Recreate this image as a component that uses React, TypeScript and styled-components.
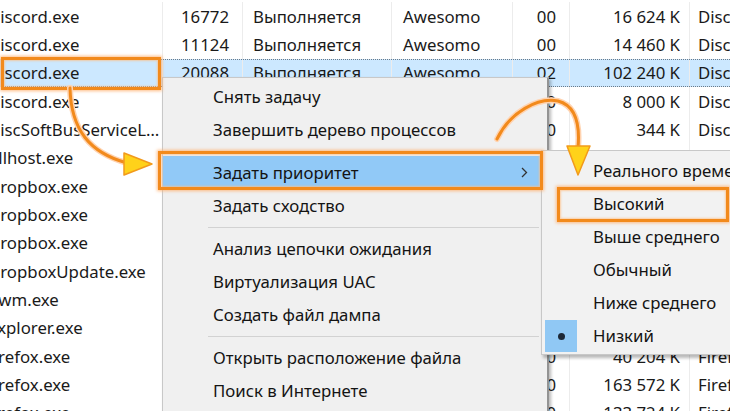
import React from "react";
import styled, { createGlobalStyle, css } from "styled-components";

const GlobalStyle = createGlobalStyle`
  html, body { margin: 0; padding: 0; background: #ffffff; }
  body { font-family: "Noto Sans", "Open Sans", "DejaVu Sans", sans-serif; color: #1a1a1a; }
  * { box-sizing: border-box; }
`;

const Screen = styled.div`
  position: relative;
  width: 730px;
  height: 411px;
  overflow: hidden;
  background: #ffffff;
`;

const Table = styled.div`
  display: flex;
  flex-direction: column;
  padding-top: 2px;
  margin-left: -12px;
  width: 760px;
`;

const Row = styled.div<{ $selected?: boolean }>`
  display: grid;
  grid-template-columns: 175px 80px 149px 121px 57px 120px 1fr;
  height: 28.33px;
  font-size: 16.8px;
  ${(p) =>
    p.$selected &&
    css`
      background: #cce8ff;
      border-top: 1px dotted #6b7a88;
      border-bottom: 1px dotted #6b7a88;
    `}
`;

const Cell = styled.div<{ $right?: boolean; $pad: number }>`
  display: flex;
  align-items: center;
  justify-content: ${(p) => (p.$right ? "flex-end" : "flex-start")};
  padding-left: ${(p) => (p.$right ? 0 : p.$pad)}px;
  padding-right: ${(p) => (p.$right ? p.$pad : 2)}px;
  border-right: 1px solid #ececec;
  white-space: nowrap;
  overflow: hidden;
  min-width: 0;
`;

const NameText = styled.span`
  overflow: hidden;
  text-overflow: ellipsis;
  white-space: nowrap;
`;

const ContextMenu = styled.div`
  position: absolute;
  left: 162px;
  top: 77px;
  width: 387px;
  height: 360px;
  background: #f0f0f0;
  border: 1px solid #c8c8c8;
  border-right: 2px solid #939393;
  box-shadow: 2px 2px 3px rgba(0, 0, 0, 0.28);
  padding-top: 2px;
  display: flex;
  flex-direction: column;
`;

const MenuItem = styled.div<{ $active?: boolean }>`
  height: 33px;
  display: flex;
  align-items: center;
  justify-content: space-between;
  padding-left: 50px;
  padding-right: 16px;
  font-size: 16.8px;
  color: #141414;
  margin: 0 3px 0 0;
  ${(p) =>
    p.$active &&
    css`
      background: #91c9f7;
    `}
`;

const MenuSeparator = styled.div`
  height: 10px;
  display: flex;
  align-items: center;
  padding-left: 45px;
  padding-right: 8px;
  &::after {
    content: "";
    flex: 1;
    height: 1px;
    background: #d2d2d2;
  }
`;

const SubMenu = styled.div`
  position: absolute;
  left: 541px;
  top: 150px;
  width: 240px;
  height: 205px;
  background: #f2f2f2;
  border: 1px solid #c8c8c8;
  box-shadow: 2px 3px 3px rgba(0, 0, 0, 0.28);
  padding-top: 3px;
  display: flex;
  flex-direction: column;
`;

const SubItem = styled.div`
  position: relative;
  height: 33px;
  display: flex;
  align-items: center;
  padding-left: 51px;
  font-size: 16.8px;
  color: #141414;
  white-space: nowrap;
`;

const CheckMark = styled.span`
  position: absolute;
  left: 3px;
  top: 1px;
  width: 32px;
  height: 32px;
  background: #90c8f4;
  display: flex;
  align-items: center;
  justify-content: center;
  &::after {
    content: "";
    width: 7px;
    height: 7px;
    border-radius: 50%;
    background: #1c2836;
  }
`;

const Frame = styled.div<{ $x: number; $y: number; $w: number; $h: number }>`
  position: absolute;
  left: ${(p) => p.$x}px;
  top: ${(p) => p.$y}px;
  width: ${(p) => p.$w}px;
  height: ${(p) => p.$h}px;
  border: 3px solid #f28a1c;
  box-shadow: 0 0 3px 1px rgba(255, 176, 110, 0.85), inset 0 0 2px 1px rgba(255, 190, 130, 0.7);
  pointer-events: none;
`;

const Overlay = styled.svg`
  position: absolute;
  left: 0;
  top: 0;
  width: 730px;
  height: 411px;
  pointer-events: none;
`;

type Proc = { name: string; pid: string; status: string; user: string; cpu: string; mem: string; desc: string; selected?: boolean };

const procs: Proc[] = [
  { name: "Discord.exe", pid: "16772", status: "Выполняется", user: "Awesomo", cpu: "00", mem: "16 624 K", desc: "Discord" },
  { name: "Discord.exe", pid: "11124", status: "Выполняется", user: "Awesomo", cpu: "00", mem: "14 460 K", desc: "Discord" },
  { name: "Discord.exe", pid: "20088", status: "Выполняется", user: "Awesomo", cpu: "02", mem: "102 240 K", desc: "Discord", selected: true },
  { name: "Discord.exe", pid: "6404", status: "Выполняется", user: "Awesomo", cpu: "00", mem: "8 000 K", desc: "Discord" },
  { name: "DiscSoftBusServiceLite.exe", pid: "3960", status: "Выполняется", user: "СИСТЕМА", cpu: "00", mem: "344 K", desc: "Disc Soft" },
  { name: "dllhost.exe", pid: "9188", status: "Выполняется", user: "Awesomo", cpu: "00", mem: "1 652 K", desc: "COM Surrogate" },
  { name: "Dropbox.exe", pid: "7700", status: "Выполняется", user: "Awesomo", cpu: "00", mem: "52 188 K", desc: "Dropbox" },
  { name: "Dropbox.exe", pid: "7840", status: "Выполняется", user: "Awesomo", cpu: "00", mem: "1 212 K", desc: "Dropbox" },
  { name: "Dropbox.exe", pid: "7932", status: "Выполняется", user: "Awesomo", cpu: "00", mem: "2 104 K", desc: "Dropbox" },
  { name: "DropboxUpdate.exe", pid: "5512", status: "Выполняется", user: "СИСТЕМА", cpu: "00", mem: "980 K", desc: "Dropbox Update" },
  { name: "dwm.exe", pid: "1124", status: "Выполняется", user: "DWM-1", cpu: "01", mem: "38 420 K", desc: "Desktop Window" },
  { name: "explorer.exe", pid: "6012", status: "Выполняется", user: "Awesomo", cpu: "00", mem: "64 312 K", desc: "Explorer" },
  { name: "firefox.exe", pid: "10244", status: "Выполняется", user: "Awesomo", cpu: "00", mem: "40 204 K", desc: "Firefox" },
  { name: "firefox.exe", pid: "10388", status: "Выполняется", user: "Awesomo", cpu: "00", mem: "163 572 K", desc: "Firefox" },
  { name: "firefox.exe", pid: "10512", status: "Выполняется", user: "Awesomo", cpu: "00", mem: "133 724 K", desc: "Firefox" },
];

const Chevron = () => (
  <svg width="7" height="11" viewBox="0 0 7 11">
    <polyline points="1,1 5.5,5.5 1,10" fill="none" stroke="#333" strokeWidth="1.3" />
  </svg>
);

export default function App() {
  return (
    <Screen>
      <GlobalStyle />
      <Table>
        {procs.map((p, i) => (
          <Row key={i} $selected={p.selected}>
            <Cell $pad={0}>
              <NameText>{p.name}</NameText>
            </Cell>
            <Cell $pad={18}>{p.pid}</Cell>
            <Cell $pad={10}>{p.status}</Cell>
            <Cell $pad={11}>{p.user}</Cell>
            <Cell $right $pad={13}>{p.cpu}</Cell>
            <Cell $right $pad={9}>{p.mem}</Cell>
            <Cell $pad={8}>{p.desc}</Cell>
          </Row>
        ))}
      </Table>

      <ContextMenu>
        <MenuItem>Снять задачу</MenuItem>
        <MenuItem>Завершить дерево процессов</MenuItem>
        <MenuSeparator />
        <MenuItem $active>
          <span>Задать приоритет</span>
          <Chevron />
        </MenuItem>
        <MenuItem>Задать сходство</MenuItem>
        <MenuSeparator />
        <MenuItem>Анализ цепочки ожидания</MenuItem>
        <MenuItem>Виртуализация UAC</MenuItem>
        <MenuItem>Создать файл дампа</MenuItem>
        <MenuSeparator />
        <MenuItem>Открыть расположение файла</MenuItem>
        <MenuItem>Поиск в Интернете</MenuItem>
      </ContextMenu>

      <SubMenu>
        <SubItem>Реального времени</SubItem>
        <SubItem>Высокий</SubItem>
        <SubItem>Выше среднего</SubItem>
        <SubItem>Обычный</SubItem>
        <SubItem>Ниже среднего</SubItem>
        <SubItem>
          <CheckMark />
          Низкий
        </SubItem>
      </SubMenu>

      <Frame $x={1} $y={57} $w={160} $h={33} />
      <Frame $x={158} $y={151} $w={385} $h={39} />
      <Frame $x={557} $y={187} $w={172} $h={35} />

      <Overlay viewBox="0 0 730 411">
        <g fill="none" strokeLinecap="round">
          <path d="M 70 88 C 71 130, 90 153, 127 163" stroke="#ffd3b0" strokeWidth="6" />
          <path d="M 70 88 C 71 130, 90 153, 127 163" stroke="#f28a1c" strokeWidth="3" />
          <path d="M 497 139 C 510 112, 538 97, 558 101 C 577 106, 580 126, 578 148" stroke="#ffd3b0" strokeWidth="6" />
          <path d="M 497 139 C 510 112, 538 97, 558 101 C 577 106, 580 126, 578 148" stroke="#f28a1c" strokeWidth="3" />
        </g>
        <polygon points="124,153 152,164 124,175" fill="#ffd21a" stroke="#f29a1c" strokeWidth="1.5" strokeLinejoin="round" />
        <polygon points="567,146 590,146 578,175" fill="#ffd21a" stroke="#f29a1c" strokeWidth="1.5" strokeLinejoin="round" />
      </Overlay>
    </Screen>
  );
}
